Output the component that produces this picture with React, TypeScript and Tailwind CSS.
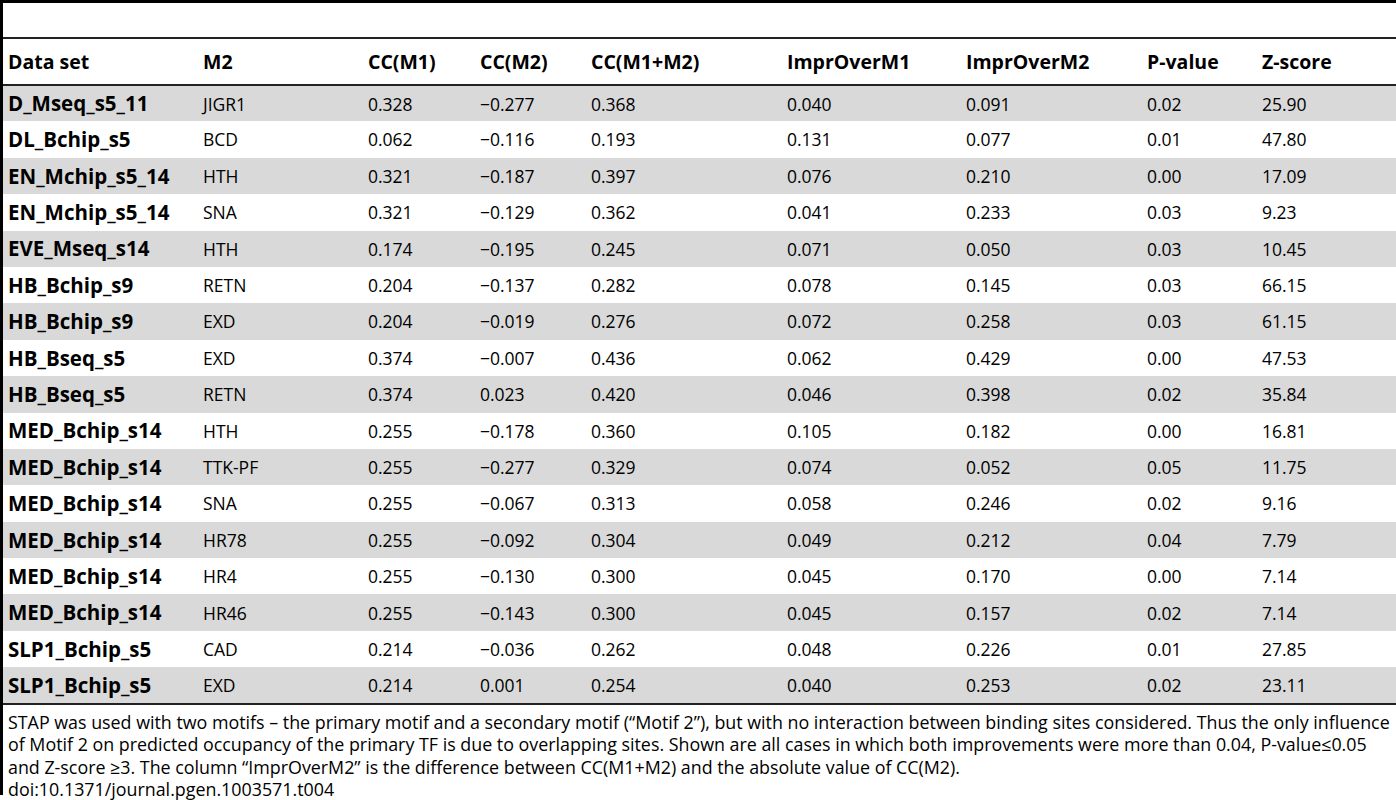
import React from 'react';

const rows: string[][] = [
  ['D_Mseq_s5_11', 'JIGR1', '0.328', '−0.277', '0.368', '0.040', '0.091', '0.02', '25.90'],
  ['DL_Bchip_s5', 'BCD', '0.062', '−0.116', '0.193', '0.131', '0.077', '0.01', '47.80'],
  ['EN_Mchip_s5_14', 'HTH', '0.321', '−0.187', '0.397', '0.076', '0.210', '0.00', '17.09'],
  ['EN_Mchip_s5_14', 'SNA', '0.321', '−0.129', '0.362', '0.041', '0.233', '0.03', '9.23'],
  ['EVE_Mseq_s14', 'HTH', '0.174', '−0.195', '0.245', '0.071', '0.050', '0.03', '10.45'],
  ['HB_Bchip_s9', 'RETN', '0.204', '−0.137', '0.282', '0.078', '0.145', '0.03', '66.15'],
  ['HB_Bchip_s9', 'EXD', '0.204', '−0.019', '0.276', '0.072', '0.258', '0.03', '61.15'],
  ['HB_Bseq_s5', 'EXD', '0.374', '−0.007', '0.436', '0.062', '0.429', '0.00', '47.53'],
  ['HB_Bseq_s5', 'RETN', '0.374', '0.023', '0.420', '0.046', '0.398', '0.02', '35.84'],
  ['MED_Bchip_s14', 'HTH', '0.255', '−0.178', '0.360', '0.105', '0.182', '0.00', '16.81'],
  ['MED_Bchip_s14', 'TTK-PF', '0.255', '−0.277', '0.329', '0.074', '0.052', '0.05', '11.75'],
  ['MED_Bchip_s14', 'SNA', '0.255', '−0.067', '0.313', '0.058', '0.246', '0.02', '9.16'],
  ['MED_Bchip_s14', 'HR78', '0.255', '−0.092', '0.304', '0.049', '0.212', '0.04', '7.79'],
  ['MED_Bchip_s14', 'HR4', '0.255', '−0.130', '0.300', '0.045', '0.170', '0.00', '7.14'],
  ['MED_Bchip_s14', 'HR46', '0.255', '−0.143', '0.300', '0.045', '0.157', '0.02', '7.14'],
  ['SLP1_Bchip_s5', 'CAD', '0.214', '−0.036', '0.262', '0.048', '0.226', '0.01', '27.85'],
  ['SLP1_Bchip_s5', 'EXD', '0.214', '0.001', '0.254', '0.040', '0.253', '0.02', '23.11'],
];

const headers = ['Data set', 'M2', 'CC(M1)', 'CC(M2)', 'CC(M1+M2)', 'ImprOverM1', 'ImprOverM2', 'P-value', 'Z-score'];

export default function App() {
  return (
    <div className="w-[1396px] h-[800px] bg-white text-black font-['Open_Sans',sans-serif] text-[17.5px]">
      <div className="h-[795px] border-l-[3px] border-t-[3px] border-black">
        <div className="h-[34px]" />
        <table className="w-full table-fixed border-collapse">
          <colgroup>
            <col className="w-[195px]" />
            <col className="w-[165px]" />
            <col className="w-[112px]" />
            <col className="w-[111px]" />
            <col className="w-[196px]" />
            <col className="w-[179px]" />
            <col className="w-[181px]" />
            <col className="w-[115px]" />
            <col />
          </colgroup>
          <thead>
            <tr className="h-[47px] border-t-2 border-b-2 border-[#222]">
              {headers.map((h) => (
                <th key={h} className="pl-[5px] text-left font-bold text-[19.5px]">{h}</th>
              ))}
            </tr>
          </thead>
          <tbody className="border-b-2 border-[#222]">
            {rows.map((r, i) => (
              <tr key={i} className={`h-[36.4px] ${i % 2 === 0 ? 'bg-[#d9d9d9]' : 'bg-white'}`}>
                {r.map((c, j) => (
                  <td key={j} className={`pl-[5px] ${j === 0 ? 'font-bold text-[20.5px]' : ''}`}>{c}</td>
                ))}
              </tr>
            ))}
          </tbody>
        </table>
        <p className="mt-[6px] pl-[5px] text-[17.85px] leading-[22.5px] whitespace-nowrap">
          STAP was used with two motifs – the primary motif and a secondary motif (“Motif 2”), but with no interaction between binding sites considered. Thus the only influence
          <br />
          of Motif 2 on predicted occupancy of the primary TF is due to overlapping sites. Shown are all cases in which both improvements were more than 0.04, P-value≤0.05
          <br />
          and Z-score ≥3. The column “ImprOverM2” is the difference between CC(M1+M2) and the absolute value of CC(M2).
          <br />
          doi:10.1371/journal.pgen.1003571.t004
        </p>
      </div>
    </div>
  );
}
